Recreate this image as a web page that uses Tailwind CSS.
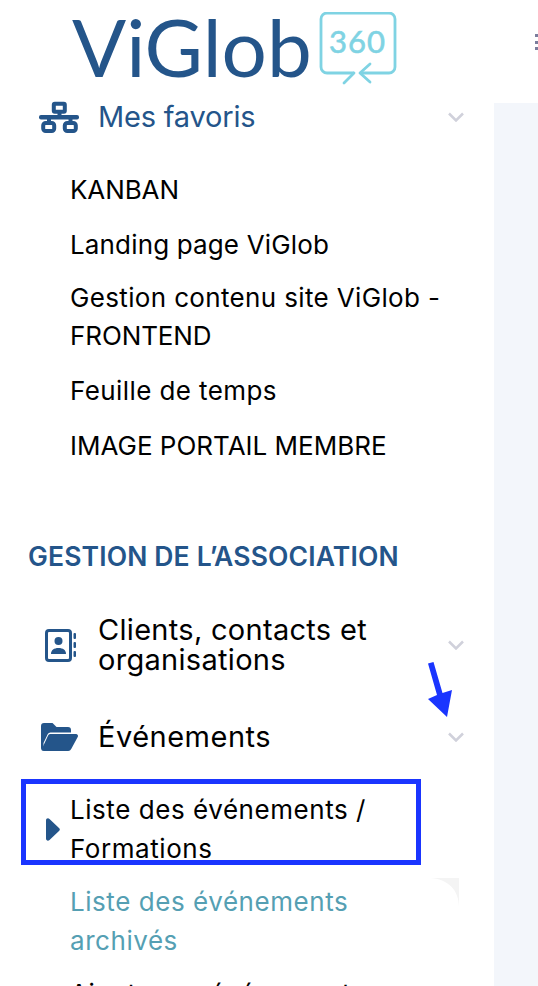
<!DOCTYPE html>
<html lang="fr">
<head>
    <meta charset="UTF-8">
    <meta name="viewport" content="width=device-width, initial-scale=1.0">
    <title>ViGlob 360</title>
    <script src="https://cdn.jsdelivr.net/npm/@tailwindcss/browser@4"></script>
</head>
<body class="bg-white font-['Inter',sans-serif]">
    <div class="relative flex h-[986px] w-[538px] overflow-hidden">
        <!-- Sidebar -->
        <aside class="w-[494px] shrink-0 bg-white">
            <!-- Logo -->
            <div class="flex h-[98px] items-start pl-[72px] pt-[12px]">
                <span class="mt-[-14px] font-['Lato',sans-serif] text-[80px] leading-[96px] text-[#24558a]">ViGlob</span>
                <svg class="ml-[7px]" width="78" height="73" viewBox="0 0 78 73" fill="none" stroke="#7fd3e3">
                    <path d="M35 61H8a6 6 0 0 1-6-6V7a6 6 0 0 1 6-6h62a6 6 0 0 1 6 6v48a6 6 0 0 1-6 6H41" stroke-width="2.800"/>
                    <path d="M35 61L25 71M51 52L41 61l10 9" stroke-width="2.800" stroke-linecap="round" stroke-linejoin="round"/>
                    <text x="10" y="41" font-family="Lato" font-size="31" fill="#7fd3e3" stroke-width=".6" letter-spacing="1">360</text>
                </svg>
            </div>

            <!-- Mes favoris -->
            <div class="flex h-[38px] items-center pl-[39px] pr-[30px]">
                <svg class="w-[40px] shrink-0" width="40" height="32" viewBox="0 0 40 32" fill="#24558a">
                    <rect x="14.800" y="2.800" width="11" height="8" rx="1" fill="none" stroke="#24558a" stroke-width="4"/>
                    <rect x="0" y="14" width="40" height="4.500" rx="2"/>
                    <rect x="18.500" y="11" width="4" height="5"/>
                    <rect x="8" y="17" width="4" height="4"/>
                    <rect x="29.500" y="17" width="4" height="4"/>
                    <rect x="4.200" y="22" width="11" height="8" rx="2.500" fill="none" stroke="#24558a" stroke-width="4"/>
                    <rect x="25.800" y="22" width="11" height="8" rx="2.500" fill="none" stroke="#24558a" stroke-width="4"/>
                </svg>
                <span class="ml-[19px] flex-1 text-[29px] tracking-[-0.2px] text-[#24558a]">Mes favoris</span>
                <svg width="16" height="10" viewBox="0 0 16 10" fill="none" stroke="#d0d1db" stroke-width="2.500"><path d="M1 1.500l7 7 7-7"/></svg>
            </div>

            <!-- Favoris links -->
            <ul class="mt-[35px] flex flex-col pl-[70px] pr-[40px] text-[26px] leading-[38px] text-black">
                <li class="tracking-[-0.1px]">KANBAN</li>
                <li class="mt-[17px] tracking-[0.15px]">Landing page ViGlob</li>
                <li class="mt-[15px] tracking-[0.35px]">Gestion contenu site ViGlob -<br><span class="tracking-[-0.1px]">FRONTEND</span></li>
                <li class="mt-[17px] tracking-[0.4px]">Feuille de temps</li>
                <li class="mt-[17px] tracking-[0px]">IMAGE PORTAIL MEMBRE</li>
            </ul>

            <h2 class="mt-[73px] pl-[28px] text-[26.500px] leading-[36px] font-semibold tracking-[0.15px] text-[#24558a]">GESTION DE L’ASSOCIATION</h2>

            <!-- Clients -->
            <div class="mt-[41px] flex items-center pl-[45px] pr-[30px]">
                <svg class="shrink-0" width="31" height="33" viewBox="0 0 31 33" fill="#24558a">
                    <path fill-rule="evenodd" d="M4 0h19a4 4 0 0 1 4 4v25a4 4 0 0 1-4 4H4a4 4 0 0 1-4-4V4a4 4 0 0 1 4-4zm0 3a1 1 0 0 0-1 1v25a1 1 0 0 0 1 1h19a1 1 0 0 0 1-1V4a1 1 0 0 0-1-1z"/>
                    <circle cx="13.500" cy="12" r="4"/>
                    <path d="M6 25c0-4 3-6 7.500-6s7.500 2 7.500 6z"/>
                    <rect x="28.500" y="4" width="2.500" height="6" rx="1"/>
                    <rect x="28.500" y="13" width="2.500" height="6" rx="1"/>
                    <rect x="28.500" y="22" width="2.500" height="6" rx="1"/>
                </svg>
                <span class="ml-[22px] flex-1 text-[29px] leading-[30px] tracking-[0.3px] text-black">Clients, contacts et organisations</span>
                <svg width="16" height="10" viewBox="0 0 16 10" fill="none" stroke="#d0d1db" stroke-width="2.500"><path d="M1 1.500l7 7 7-7"/></svg>
            </div>

            <!-- Evenements -->
            <div class="mt-[42px] flex items-center pl-[41px] pr-[30px]">
                <svg class="shrink-0" width="37" height="28" viewBox="0 0 37 28" fill="#24558a">
                    <path d="M3 0h8.500l4 4H27a3 3 0 0 1 3 3v2.500H9.500a3 3 0 0 0-2.700 1.600L2.500 20V28A3 3 0 0 1 0 25V3a3 3 0 0 1 3-3z"/>
                    <path d="M9 11h26a2 2 0 0 1 1.700 3l-6.500 12a3.500 3.500 0 0 1-3 2H3a2 2 0 0 1-1.700-3l5.800-12.500A2.500 2.500 0 0 1 9 11z"/>
                </svg>
                <span class="ml-[20px] flex-1 text-[29px] leading-[40px] tracking-[0.5px] text-black">Événements</span>
                <svg width="16" height="10" viewBox="0 0 16 10" fill="none" stroke="#d0d1db" stroke-width="2.500"><path d="M1 1.500l7 7 7-7"/></svg>
            </div>

            <!-- Sous-menu -->
            <ul class="mt-[34px] flex flex-col gap-[15px] pl-[70px] pr-[110px] text-[26px] leading-[38.500px] tracking-[0.55px]">
                <li class="relative text-black">
                    <svg class="absolute left-[-24px] top-[27px]" width="14" height="23" viewBox="0 0 14 23" fill="#24558a"><path d="M0 2.500C0 .5 2 -.5 3.500 1L13 10a2 2 0 0 1 0 3l-9.500 9C2 23.500 0 22.500 0 20.500z"/></svg>
                    Liste des événements / Formations
                </li>
                <li class="text-[#559fb3]">Liste des événements archivés</li>
                <li class="text-black">Ajouter un événement</li>
            </ul>
        </aside>

        <!-- Contenu -->
        <main class="flex flex-1 flex-col">
            <div class="relative h-[103px] bg-white">
                <span class="absolute left-[41px] top-[34px] flex flex-col gap-[3.500px]">
                    <i class="block h-[3px] w-[3px] bg-[#7a7d9c]"></i>
                    <i class="block h-[3px] w-[3px] bg-[#7a7d9c]"></i>
                    <i class="block h-[3px] w-[3px] bg-[#7a7d9c]"></i>
                </span>
            </div>
            <div class="flex-1 bg-[#f3f6fb]"></div>
        </main>

        <!-- Annotations -->
        <div class="absolute left-[21px] top-[779px] h-[86px] w-[400px] border-[5px] border-[#1a35ff]"></div>
        <svg class="absolute left-[425px] top-[660px]" width="30" height="60" viewBox="0 0 30 60" fill="#1a35ff">
            <path d="M3 3.500L8.500 2 17.500 33 27 30 22 57 3 39 12 35z"/>
        </svg>
        <svg class="absolute left-[430px] top-[878px]" width="29" height="29" viewBox="0 0 29 29" fill="#f4f4f4"><path d="M0 0h29v29C29 12 18 1 0 0z"/></svg>
    </div>
</body>
</html>
